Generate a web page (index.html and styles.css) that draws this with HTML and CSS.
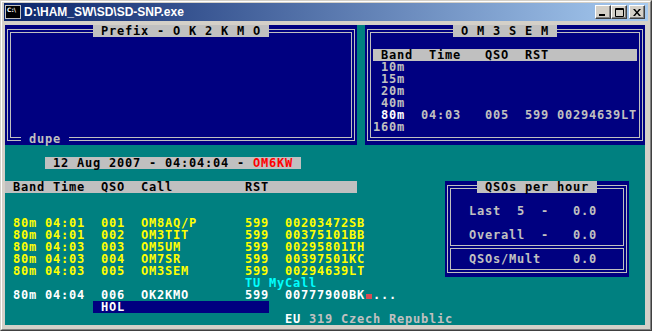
FILE: index.html
```html
<!DOCTYPE html>
<html>
<head>
	<title>SD-SNP</title>
	<link rel="stylesheet" href="styles.css">
</head>
<body>
<div class="window">
	<div class="frame">
		<div class="titlebar">
			<svg class="appicon" width="16" height="16" viewBox="0 0 16 16">
				<rect x="0" y="1" width="16" height="14" fill="#c0c0c0"/>
				<rect x="1" y="2" width="14" height="12" fill="#000"/>
				<text x="2" y="8" fill="#fff" font-family="DejaVu Sans" font-size="6" font-weight="bold">C:\</text>
			</svg>
			<span class="title">D:\HAM_SW\SD\SD-SNP.exe</span>
			<span class="tbtn tbtn_min"><svg width="8" height="8" viewBox="0 0 8 8"><rect x="0" y="6" width="6" height="2" fill="#000"/></svg></span>
			<span class="tbtn"><svg width="9" height="9" viewBox="0 0 9 9"><path d="M0.5 0.5h8v8h-8z M0 1.5h9" stroke="#000" fill="none"/></svg></span>
			<span class="tbtn tbtn_close"><svg width="8" height="7" viewBox="0 0 8 7"><path d="M0 0h2l2 2.5 2-2.5h2l-3 3.5 3 3.5h-2l-2-2.5-2 2.5h-2l3-3.5z" fill="#000"/></svg></span>
		</div>

		<div class="console">
			<!-- windows -->
			<div class="box box_prefix"></div>
			<div class="box box_call"></div>
			<div class="box box_rate"></div>

			<!-- prefix window -->
			<div class="ln on_grey cap_prefix"> Prefix - O K 2 K M O </div>
			<div class="ln on_blue dupe"> dupe </div>

			<!-- last call window -->
			<div class="ln on_grey cap_call"> O M 3 S E M </div>
			<div class="ln on_grey call_head"> Band  Time   QSO  RST</div>
			<div class="ln g bands b10"> 10m</div>
			<div class="ln g bands b15"> 15m</div>
			<div class="ln g bands b20"> 20m</div>
			<div class="ln g bands b40"> 40m</div>
			<div class="ln g bands b80"> <span class="w">80m</span>  04:03   005  599 00294639LT</div>
			<div class="ln g bands b160">160m</div>

			<!-- date line -->
			<div class="ln on_grey date"> 12 Aug 2007 - 04:04:04 - <span class="r">OM6KW</span> </div>

			<!-- log -->
			<div class="ln on_grey log_head"> Band Time  QSO  Call         RST</div>
			<div class="ln y log q1">80m 04:01  001  OM8AQ/P      599  00203472SB</div>
			<div class="ln y log q2">80m 04:01  002  OM3TIT       599  00375101BB</div>
			<div class="ln y log q3">80m 04:03  003  OM5UM        599  00295801IH</div>
			<div class="ln y log q4">80m 04:03  004  OM7SR        599  00397501KC</div>
			<div class="ln y log q5">80m 04:03  005  OM3SEM       599  00294639LT</div>
			<div class="ln c tu">TU MyCall</div>
			<div class="ln w log q6">80m 04:04  006  OK2KMO       599  00777900BK<span class="cursor"> </span>...</div>
			<div class="ln on_blue hol"> HOL</div>
			<div class="ln g country"><span class="w">EU</span> 319 Czech Republic</div>

			<!-- rate window -->
			<div class="ln on_grey cap_rate"> QSOs per hour </div>
			<div class="ln g rate r_last">Last  5  -   0.0</div>
			<div class="ln g rate r_all">Overall  -   0.0</div>
			<div class="rate_sep"></div>
			<div class="ln g rate r_mult">QSOs/Mult    0.0</div>
		</div>
	</div>
</div>
</body>
</html>
```

FILE: styles.css
```css
body {
	margin: 0;
	background: #d4d0c8;
}
.window {
	width: 652px;
	height: 331px;
	box-sizing: border-box;
	background: #d4d0c8;
	border: 1px solid;
	border-color: #d4d0c8 #404040 #404040 #d4d0c8;
	overflow: hidden;
}
.frame {
	height: 100%;
	box-sizing: border-box;
	border: 1px solid;
	border-color: #fff #808080 #808080 #fff;
	padding: 1px 2px 2px 2px;
}

/* title bar */
.titlebar {
	display: flex;
	align-items: center;
	height: 18px;
	padding: 0 3px 0 1px;
	background: linear-gradient(to right, #0a246a, #a6caf0);
}
.appicon {
	flex: none;
}
.title {
	margin-left: 3px;
	font-family: "Liberation Sans", sans-serif;
	font-weight: bold;
	font-size: 12px;
	color: #fff;
}
.tbtn {
	display: flex;
	align-items: center;
	justify-content: center;
	width: 16px;
	height: 14px;
	box-sizing: border-box;
	background: #d4d0c8;
	border: 1px solid;
	border-color: #fff #404040 #404040 #fff;
	box-shadow: inset -1px -1px #808080;
}
.tbtn_min {
	margin-left: auto;
}
.tbtn_close {
	margin-left: 2px;
}

/* console, 80 x 25 cells of 8 x 12 */
.console {
	display: grid;
	grid-template-columns: repeat(80, 8px);
	grid-template-rows: repeat(25, 12px);
	width: 640px;
	height: 300px;
	margin: 4px 0 0 1px;
	overflow: hidden;
	background: #008080;
	font-family: "DejaVu Sans Mono", monospace;
	font-weight: bold;
	font-size: 12px;
	letter-spacing: 0.7754px;
	line-height: 12px;
}
.ln {
	white-space: pre;
	z-index: 1;
}
.on_grey { background: #c0c0c0; color: #000; }
.on_blue { background: #000080; color: #c0c0c0; }
.g { color: #c0c0c0; }
.w { color: #fff; }
.y { color: #ffff00; }
.c { color: #00ffff; }
.r { color: #ff0000; }

/* double line boxes */
.box {
	position: relative;
	z-index: 0;
	background: #000080;
}
.box::before,
.box::after {
	content: "";
	position: absolute;
	border: 1px solid #c0c0c0;
}
.box::before {
	inset: 4px 2px;
}
.box::after {
	inset: 7px 5px;
}
.box_prefix { grid-area: 1 / 1 / 11 / 45; }
.box_call { grid-area: 1 / 46 / 11 / 81; }
.box_rate { grid-area: 14 / 56 / 22 / 79; }

.cap_prefix { grid-area: 1 / 12 / 2 / 34; }
.dupe { grid-area: 10 / 3 / 11 / 9; }

.cap_call { grid-area: 1 / 57 / 2 / 70; }
.call_head { grid-area: 3 / 47 / 4 / 80; }
.bands { grid-column: 47 / 80; }
.b10 { grid-row: 4; }
.b15 { grid-row: 5; }
.b20 { grid-row: 6; }
.b40 { grid-row: 7; }
.b80 { grid-row: 8; }
.b160 { grid-row: 9; }

.date { grid-area: 12 / 6 / 13 / 38; }
.log_head { grid-area: 14 / 1 / 15 / 45; }
.log { grid-column: 2 / 60; }
.q1 { grid-row: 17; }
.q2 { grid-row: 18; }
.q3 { grid-row: 19; }
.q4 { grid-row: 20; }
.q5 { grid-row: 21; }
.tu { grid-area: 22 / 31 / 23 / 45; }
.q6 { grid-row: 23; }
.cursor {
	display: inline-block;
	width: 8px;
	height: 12px;
	letter-spacing: 0;
	vertical-align: top;
	background: linear-gradient(#d84c54, #d84c54) 1px 5px / 6px 5px no-repeat;
}
.hol { grid-area: 24 / 12 / 25 / 34; color: #fff; }
.country { grid-area: 25 / 36 / 26 / 60; }

.cap_rate { grid-area: 14 / 60 / 15 / 75; }
.rate { grid-column: 59 / 76; }
.r_last { grid-row: 16; }
.r_all { grid-row: 18; }
.r_mult { grid-row: 20; }
.rate_sep {
	grid-area: 19 / 56 / 20 / 79;
	z-index: 1;
	align-self: start;
	height: 4px;
	margin: 4px 5px 0 5px;
	box-sizing: border-box;
	background: #000080;
	border-top: 1px solid #c0c0c0;
	border-bottom: 1px solid #c0c0c0;
}
```
